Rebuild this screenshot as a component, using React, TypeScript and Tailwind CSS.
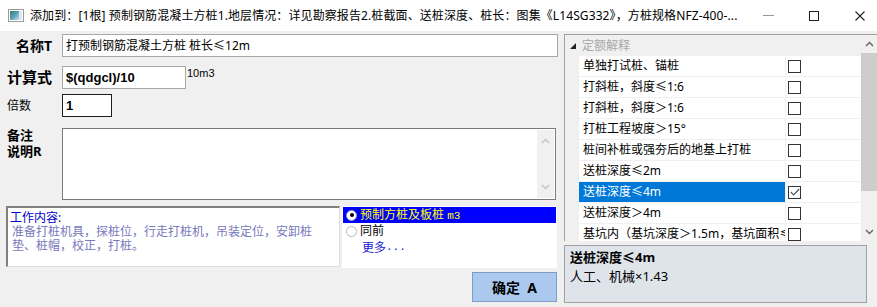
import React from "react";

const cjk = "font-['Noto_Sans','Noto_Sans_CJK_SC',sans-serif]";

const rows: { label: string; checked?: boolean; selected?: boolean }[] = [
  { label: "单独打试桩、锚桩" },
  { label: "打斜桩，斜度≤1:6" },
  { label: "打斜桩，斜度＞1:6" },
  { label: "打桩工程坡度＞15°" },
  { label: "桩间补桩或强夯后的地基上打桩" },
  { label: "送桩深度≤2m" },
  { label: "送桩深度≤4m", checked: true, selected: true },
  { label: "送桩深度＞4m" },
  { label: "基坑内（基坑深度＞1.5m，基坑面积≤10m²）" },
];

function Chevron({ up }: { up?: boolean }) {
  return (
    <svg width="9" height="6" viewBox="0 0 9 6" className="block">
      <path
        d={up ? "M1 5 L4.5 1.5 L8 5" : "M1 1 L4.5 4.5 L8 1"}
        fill="none"
        stroke="#c2c2c2"
        strokeWidth="1.4"
      />
    </svg>
  );
}

function DarkChevron({ up }: { up?: boolean }) {
  return (
    <svg width="9" height="6" viewBox="0 0 9 6" className="block">
      <path
        d={up ? "M1 5 L4.5 1.5 L8 5" : "M1 1 L4.5 4.5 L8 1"}
        fill="none"
        stroke="#606060"
        strokeWidth="1.3"
      />
    </svg>
  );
}

export default function App() {
  return (
    <div className={`w-[877px] h-[307px] bg-[#f0f0f0] overflow-hidden text-black ${cjk}`}>
      {/* Title bar */}
      <div className="h-[31px] bg-white flex items-center">
        <div className="ml-[8px] w-[16px] h-[13px] border border-[#9a9a9a] bg-white p-[1px] flex">
          <div className="flex-1 bg-gradient-to-br from-[#2f7f6a] via-[#5aa0b8] to-[#c8dcec]" />
          <div className="w-[3px] bg-[#dfe6ee]" />
        </div>
        <div className="ml-[6px] text-[12px] leading-[16px] whitespace-nowrap tracking-[0.1px]">
          添加到：[1根] 预制钢筋混凝土方桩1.地层情况：详见勘察报告2.桩截面、送桩深度、桩长：图集《L14SG332》，方桩规格NFZ-400-...
        </div>
        <div className="flex-1" />
        <div className="w-[11px] h-[1px] bg-[#9a9a9a] mr-[35px]" />
        <div className="w-[10px] h-[10px] border border-[#222] mr-[36px]" />
        <svg width="10" height="10" viewBox="0 0 10 10" className="mr-[12px]">
          <path d="M0.5 0.5 L9.5 9.5 M9.5 0.5 L0.5 9.5" stroke="#222" strokeWidth="1.1" />
        </svg>
      </div>

      {/* Body */}
      <div className="flex">
        {/* Left */}
        <div className="w-[564px] flex flex-col">
          {/* Name */}
          <div className="flex mt-[3px] h-[23px]">
            <div className="w-[62px] pr-[10px] text-right text-[14px] font-bold leading-[23px]">名称T</div>
            <div className="w-[496px] h-[23px] bg-white border border-[#a8a8a8] pl-[3px] text-[12px] leading-[21px] whitespace-nowrap">
              打预制钢筋混凝土方桩 桩长≤12m
            </div>
          </div>
          {/* Formula */}
          <div className="flex mt-[9px] h-[23px]">
            <div className="w-[62px] pl-[7px] text-[15px] font-bold leading-[23px] whitespace-nowrap">计算式</div>
            <div className="w-[124px] h-[23px] bg-white border border-[#a8a8a8] pl-[3px] text-[13px] font-bold leading-[21px] font-['Liberation_Sans',sans-serif]">
              $(qdgcl)/10
            </div>
            <div className="ml-[1px] text-[11px] leading-[13px] mt-[1px] font-['Liberation_Sans',sans-serif]">10m3</div>
          </div>
          {/* Multiplier */}
          <div className="flex mt-[5px] h-[23px]">
            <div className="w-[62px] pl-[7px] text-[12px] leading-[23px]">倍数</div>
            <div className="w-[50px] h-[23px] bg-white border border-[#1e1e1e] pl-[3px] text-[13px] font-bold leading-[21px] font-['Liberation_Sans',sans-serif]">
              1
            </div>
          </div>
          {/* Remarks */}
          <div className="flex mt-[11px] h-[72px]">
            <div className="w-[62px] pl-[7px] text-[13px] font-bold leading-[16px] -mt-[1px]">
              <div>备注</div>
              <div>说明R</div>
            </div>
            <div className="w-[494px] h-[72px] bg-white border border-[#7a7a7a] flex justify-end">
              <div className="w-[17px] mt-[1px] mb-[1px] mr-[1px] bg-[#f0f0f0] flex flex-col items-center justify-between py-[8px]">
                <Chevron up />
                <Chevron />
              </div>
            </div>
          </div>
          {/* Bottom */}
          <div className="flex mt-[6px]">
            <div className="ml-[6px] w-[334px] h-[61px] bg-white border-t-2 border-l-2 border-[#808080] border-b border-r border-b-[#dedede] border-r-[#dedede] pl-[2px] pt-[2px] text-[12px] leading-[14px] whitespace-nowrap">
              <div className="text-[#0000c8] leading-[15px]">工作内容:</div>
              <div className="text-[#7878bc] pl-[2px]">
                <div>准备打桩机具，探桩位，行走打桩机，吊装定位，安卸桩</div>
                <div>垫、桩帽，校正，打桩。</div>
              </div>
            </div>
            <div className="ml-[2px] w-[215px] h-[62px] bg-white p-[1px] text-[12px]">
              <div className="h-[16px] bg-[#0000ff] flex items-center">
                <div className="ml-[3px] w-[11px] h-[11px] rounded-full bg-white border border-[#9a9a9a] flex items-center justify-center">
                  <div className="w-[4px] h-[4px] rounded-full bg-black" />
                </div>
                <div className="ml-[3px] text-[#ffff00] leading-[16px] whitespace-nowrap">
                  预制方桩及板桩 <span className="font-['Liberation_Mono',monospace] text-[11px]">m3</span>
                </div>
              </div>
              <div className="h-[16px] flex items-center">
                <div className="ml-[3px] w-[11px] h-[11px] rounded-full bg-white border border-[#b8b8b8]" />
                <div className="ml-[3px] leading-[16px]">同前</div>
              </div>
              <div className="h-[17px] flex items-center pl-[19px] text-[#1a1ad0] leading-[17px]">
                更多<span className="font-['Liberation_Mono',monospace] text-[11px]">...</span>
              </div>
            </div>
          </div>
          <div className="flex mt-[4px]">
            <div className="ml-[472px] w-[85px] h-[30px] bg-[#abc9ef] border border-[#7d9dc6] flex items-center justify-center text-[14px] font-bold">
              确定&nbsp;&nbsp;A
            </div>
          </div>
        </div>

        {/* Right */}
        <div className="w-[313px] flex flex-col">
          <div className="mt-[3px] h-[207px] border-t border-l border-[#a0a0a0] flex overflow-hidden">
            <div className="w-[296px] flex flex-col text-[12px]">
              <div className="h-[21px] shrink-0 bg-[#f0f0f0] flex items-center">
                <svg width="6" height="6" viewBox="0 0 6 6" className="ml-[5px]">
                  <path d="M6 0 L6 6 L0 6 Z" fill="#222" />
                </svg>
                <div className="ml-[6px] text-[#a8a8a8] leading-[21px]">定额解释</div>
              </div>
              {rows.map((r, i) => (
                <div key={i} className="h-[21px] shrink-0 flex border-b border-[#f0f0f0]">
                  <div className="w-[14px] bg-[#f0f0f0]" />
                  <div
                    className={`w-[206px] pl-[4px] leading-[20px] whitespace-nowrap overflow-hidden ${
                      r.selected ? "bg-[#0078d7] text-white" : "bg-white"
                    }`}
                  >
                    {r.label}
                  </div>
                  <div className="w-[1px] bg-[#f0f0f0]" />
                  <div className="flex-1 bg-white flex items-center">
                    <div className="ml-[2px] w-[13px] h-[13px] border border-[#333] bg-white flex items-center justify-center">
                      {r.checked && (
                        <svg width="10" height="8" viewBox="0 0 10 8">
                          <path d="M0.8 4 L3.6 6.8 L9.2 1" fill="none" stroke="#555" strokeWidth="1.2" />
                        </svg>
                      )}
                    </div>
                  </div>
                </div>
              ))}
            </div>
            <div className="w-[16px] bg-[#f0f0f0] flex flex-col">
              <div className="h-[18px] shrink-0 flex items-center justify-center">
                <DarkChevron up />
              </div>
              <div className="h-[138px] shrink-0 bg-[#cdcdcd]" />
              <div className="flex-1 flex items-end justify-center pb-[6px]">
                <DarkChevron />
              </div>
            </div>
          </div>
          <div className="mt-[4px] w-[303px] h-[58px] bg-[#dfe3ea] border border-[#a0a0a0] pl-[5px] pt-[2px] text-[13px]">
            <div className="font-bold leading-[18px]">送桩深度≤4m</div>
            <div className="leading-[18px] mt-[1px]">人工、机械×1.43</div>
          </div>
        </div>
      </div>
    </div>
  );
}
